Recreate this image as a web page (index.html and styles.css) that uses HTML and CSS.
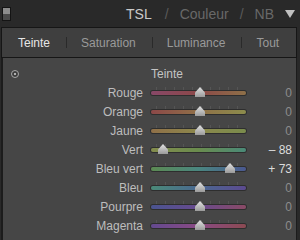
FILE: index.html
```html
<!DOCTYPE html>
<html lang="fr">
<head>
<meta charset="utf-8">
<title>TSL</title>
<link rel="stylesheet" href="styles.css">
</head>
<body>
<div class="app">
  <header class="top">
    <span class="grip"></span>
    <nav class="modes">
      <span class="mode on">TSL</span>
      <span class="slash">/</span>
      <span class="mode">Couleur</span>
      <span class="slash">/</span>
      <span class="mode">NB</span>
      <span class="tri"></span>
    </nav>
  </header>
  <div class="tabs">
    <span class="tab on">Teinte</span>
    <span class="div"></span>
    <span class="tab">Saturation</span>
    <span class="div"></span>
    <span class="tab">Luminance</span>
    <span class="div"></span>
    <span class="tab">Tout</span>
  </div>
  <section class="panel">
    <div class="grid">
      <div class="lab icon-cell"><span class="target"></span></div>
      <div class="title">Teinte</div>
      <div></div>

      <div class="lab">Rouge</div>
      <div class="slider"><div class="track t-rouge"></div><span class="thumb" style="left:44px"></span></div>
      <div class="val">0</div>

      <div class="lab">Orange</div>
      <div class="slider"><div class="track t-orange"></div><span class="thumb" style="left:44px"></span></div>
      <div class="val">0</div>

      <div class="lab">Jaune</div>
      <div class="slider"><div class="track t-jaune"></div><span class="thumb" style="left:44px"></span></div>
      <div class="val">0</div>

      <div class="lab">Vert</div>
      <div class="slider"><div class="track t-vert"></div><span class="thumb" style="left:7px"></span></div>
      <div class="val hi">– 88</div>

      <div class="lab">Bleu vert</div>
      <div class="slider"><div class="track t-bleuvert"></div><span class="thumb" style="left:74px"></span></div>
      <div class="val hi">+ 73</div>

      <div class="lab">Bleu</div>
      <div class="slider"><div class="track t-bleu"></div><span class="thumb" style="left:44px"></span></div>
      <div class="val">0</div>

      <div class="lab">Pourpre</div>
      <div class="slider"><div class="track t-pourpre"></div><span class="thumb" style="left:44px"></span></div>
      <div class="val">0</div>

      <div class="lab">Magenta</div>
      <div class="slider"><div class="track t-magenta"></div><span class="thumb" style="left:44px"></span></div>
      <div class="val">0</div>
    </div>
  </section>
</div>
</body>
</html>
```
FILE: styles.css
```css
html, body {
  margin: 0;
  padding: 0;
  background: #2a2a2a;
}
body {
  width: 300px;
  height: 240px;
  overflow: hidden;
  font-family: "Liberation Sans", Arial, sans-serif;
}
.app {
  width: 300px;
  height: 240px;
  background: #292929;
  display: flex;
  flex-direction: column;
}
.top {
  height: 27px;
  display: flex;
  align-items: center;
  justify-content: space-between;
  padding: 0 5px 0 2px;
  box-sizing: border-box;
}
.grip {
  width: 7px;
  height: 12px;
  border: 1px solid #141414;
  background: linear-gradient(#8c8c8c 0, #8c8c8c 50%, #4a4a4a 50%, #4a4a4a 100%);
}
.modes {
  display: flex;
  align-items: center;
  font-size: 14px;
  color: #686868;
}
.mode.on { color: #c9c9c9; margin-right: 2px; }
.slash { color: #5a5a5a; margin: 0 11px; }
.tri {
  width: 0;
  height: 0;
  border-left: 5px solid transparent;
  border-right: 5px solid transparent;
  border-top: 8px solid #c0c0c0;
  margin-left: 11px;
}
.tabs {
  margin: 0 3px 0 1px;
  height: 31px;
  box-sizing: border-box;
  border: 1px solid #161616;
  background: #3f3f3f;
  display: flex;
  align-items: center;
  padding: 0 0 0 16px;
  font-size: 12px;
  color: #9a9a9a;
}
.tab.on { color: #e6e6e6; }
.div {
  width: 1px;
  height: 11px;
  background: #2a2a2a;
  margin: 0 14px 0 16px;
}
.panel {
  flex: 1;
  margin: 0 3px 0 1px;
  background: #464646;
  border-left: 2px solid #1c1c1c;
  border-right: 1px solid #1c1c1c;
}
.grid {
  display: grid;
  grid-template-columns: 140px 95px 38px;
  column-gap: 8px;
  grid-auto-rows: 19px;
  padding-top: 6px;
  align-items: center;
  font-size: 12px;
}
.lab {
  text-align: right;
  color: #bdbdbd;
}
.icon-cell {
  text-align: left;
  padding-left: 8px;
  height: 19px;
  display: flex;
  align-items: center;
}
.target {
  width: 6px;
  height: 6px;
  border-radius: 50%;
  border: 1.5px solid #a8a8a8;
  background: radial-gradient(circle, #b0b0b0 0 1.2px, #3a3a3a 1.6px);
}
.title { color: #c4c4c4; }
.val {
  text-align: right;
  color: #8c8c8c;
}
.val.hi { color: #dcdcdc; }
.slider {
  position: relative;
  height: 19px;
}
.slider::before {
  content: "";
  position: absolute;
  left: 5px;
  right: 5px;
  top: 4px;
  height: 3px;
  background: repeating-linear-gradient(90deg, rgba(88,88,88,0.8) 0 1px, transparent 1px 9px);
}
.track {
  position: absolute;
  left: 0;
  right: 0;
  top: 8px;
  height: 4px;
  border-radius: 2px;
  box-shadow: 0 0 0 1px #2e2e2e;
}
.t-rouge { background: linear-gradient(90deg, #884868, #8c4848 50%, #8e7048); }
.t-orange { background: linear-gradient(90deg, #8c4848, #907048 50%, #8c8c4c); }
.t-jaune { background: linear-gradient(90deg, #907048, #8c884c 50%, #7a8c4c); }
.t-vert { background: linear-gradient(90deg, #848c4c, #6a8c4e 50%, #4a8a78); }
.t-bleuvert { background: linear-gradient(90deg, #5c8a52, #4a8680 50%, #4a5890); }
.t-bleu { background: linear-gradient(90deg, #4a8a78, #4a6890 50%, #5c4a90); }
.t-pourpre { background: linear-gradient(90deg, #4a5490, #684a8e 50%, #8a4a66); }
.t-magenta { background: linear-gradient(90deg, #644a90, #8a4a84 50%, #8c4a52); }
.thumb {
  position: absolute;
  top: 4px;
  width: 10px;
  height: 10px;
  background: linear-gradient(#e2e2e2, #9a9a9a);
  clip-path: polygon(50% 0, 100% 55%, 100% 100%, 0 100%, 0 55%);
}
```
